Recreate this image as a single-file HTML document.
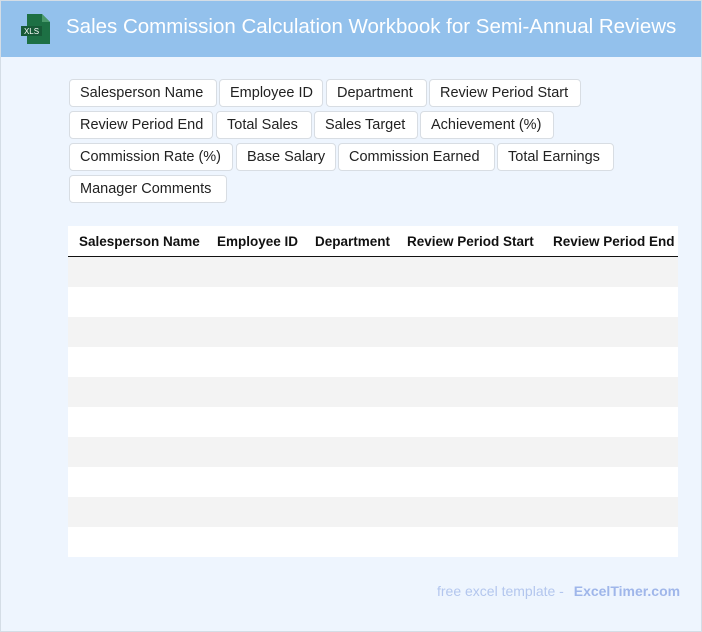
<!DOCTYPE html>
<html><head><meta charset="utf-8"><style>
*{margin:0;padding:0;box-sizing:border-box}
body{width:702px;height:632px;background:#eef5fe;font-family:"Liberation Sans",Arial,sans-serif;position:relative;overflow:hidden}
.frame{position:absolute;left:0;top:0;width:702px;height:632px;border:1px solid #d4dde6;pointer-events:none}
.hd{position:absolute;left:0;top:0;width:702px;height:57px;background:#93c1ec}
.hd h1{position:absolute;left:66px;top:15px;font-size:20.5px;font-weight:normal;color:#fff;white-space:nowrap}
.b{position:absolute;height:28px;background:#fff;border:1px solid #d8dde3;border-radius:4px;font-size:14.5px;color:#222;line-height:26px;padding-left:10px;white-space:nowrap}
.tbl{position:absolute;left:68px;top:226px;width:610px}
.th{height:31px;background:#fff;border-bottom:1.5px solid #111;position:relative}
.th span{position:absolute;top:8px;font-size:13.5px;font-weight:bold;color:#111;white-space:nowrap}
.r{height:30px;background:#fff}
.g{background:#f3f3f3}
.ft{position:absolute;top:583px;left:437px;font-size:14px;color:#b3c6ee;white-space:nowrap}
.ft b{margin-left:6px;color:#9fb6ea}
</style></head><body>
<div class="hd">
<svg style="position:absolute;left:20px;top:13px" width="32" height="32" viewBox="0 0 32 32">
<path d="M7 1h15l8 8v22H7z" fill="#1d7044"/><path d="M22 1v8h8z" fill="#4a9a6c"/>
<rect x="1" y="13" width="21" height="10" fill="#175a37"/>
<text x="11.5" y="21" font-size="8" fill="#fff" text-anchor="middle" font-family="Liberation Sans">XLS</text>
</svg>
<h1>Sales Commission Calculation Workbook for Semi-Annual Reviews</h1>
</div>
<div class="b" style="left:69px;top:79px;width:148px">Salesperson Name</div>
<div class="b" style="left:219px;top:79px;width:104px">Employee ID</div>
<div class="b" style="left:326px;top:79px;width:101px">Department</div>
<div class="b" style="left:429px;top:79px;width:152px">Review Period Start</div>
<div class="b" style="left:69px;top:111px;width:144px">Review Period End</div>
<div class="b" style="left:216px;top:111px;width:96px">Total Sales</div>
<div class="b" style="left:314px;top:111px;width:104px">Sales Target</div>
<div class="b" style="left:420px;top:111px;width:134px">Achievement (%)</div>
<div class="b" style="left:69px;top:143px;width:164px">Commission Rate (%)</div>
<div class="b" style="left:236px;top:143px;width:100px">Base Salary</div>
<div class="b" style="left:338px;top:143px;width:157px">Commission Earned</div>
<div class="b" style="left:497px;top:143px;width:117px">Total Earnings</div>
<div class="b" style="left:69px;top:175px;width:158px">Manager Comments</div>
<div class="tbl">
<div class="th"><span style="left:11px">Salesperson Name</span><span style="left:149px">Employee ID</span><span style="left:247px">Department</span><span style="left:339px">Review Period Start</span><span style="left:485px">Review Period End</span></div>
<div class="r g"></div><div class="r"></div><div class="r g"></div><div class="r"></div><div class="r g"></div><div class="r"></div><div class="r g"></div><div class="r"></div><div class="r g"></div><div class="r"></div>
</div>
<div class="ft">free excel template - <b>ExcelTimer.com</b></div>
<div class="frame"></div>
</body></html>
